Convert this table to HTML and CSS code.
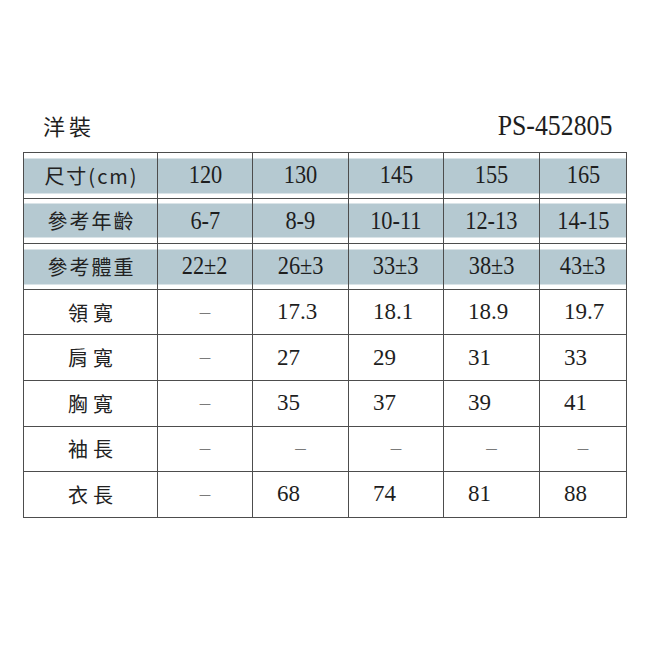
FILE: index.html
```html
<!DOCTYPE html>
<html lang="zh-Hant">
<head>
<meta charset="utf-8">
<title>洋裝 PS-452805</title>
<link rel="stylesheet" href="styles.css">
</head>
<body>
<div class="sheet">
  <div class="title-row">
    <span class="title">洋裝</span>
    <span class="code"><span class="cond">PS-452805</span></span>
  </div>
  <table class="size-table">
    <colgroup>
      <col class="c-label"><col class="c-a"><col class="c-b"><col class="c-a"><col class="c-b"><col class="c-last">
    </colgroup>
    <tr class="band">
      <th class="label">尺寸(cm)</th>
      <td><span class="cond">120</span></td>
      <td><span class="cond">130</span></td>
      <td><span class="cond">145</span></td>
      <td><span class="cond">155</span></td>
      <td><span class="cond">165</span></td>
    </tr>
    <tr class="band">
      <th class="label">參考年齡</th>
      <td><span class="cond">6-7</span></td>
      <td><span class="cond">8-9</span></td>
      <td><span class="cond">10-11</span></td>
      <td><span class="cond">12-13</span></td>
      <td><span class="cond">14-15</span></td>
    </tr>
    <tr class="band">
      <th class="label">參考體重</th>
      <td><span class="cond">22±2</span></td>
      <td><span class="cond">26±3</span></td>
      <td><span class="cond">33±3</span></td>
      <td><span class="cond">38±3</span></td>
      <td><span class="cond">43±3</span></td>
    </tr>
    <tr class="body">
      <th class="label">領寬</th>
      <td class="dash">–</td>
      <td class="val">17.3</td>
      <td class="val">18.1</td>
      <td class="val">18.9</td>
      <td class="val">19.7</td>
    </tr>
    <tr class="body">
      <th class="label">肩寬</th>
      <td class="dash">–</td>
      <td class="val">27</td>
      <td class="val">29</td>
      <td class="val">31</td>
      <td class="val">33</td>
    </tr>
    <tr class="body">
      <th class="label">胸寬</th>
      <td class="dash">–</td>
      <td class="val">35</td>
      <td class="val">37</td>
      <td class="val">39</td>
      <td class="val">41</td>
    </tr>
    <tr class="body">
      <th class="label">袖長</th>
      <td class="dash">–</td>
      <td class="dash">–</td>
      <td class="dash">–</td>
      <td class="dash">–</td>
      <td class="dash">–</td>
    </tr>
    <tr class="body">
      <th class="label">衣長</th>
      <td class="dash">–</td>
      <td class="val">68</td>
      <td class="val">74</td>
      <td class="val">81</td>
      <td class="val">88</td>
    </tr>
  </table>
</div>
</body>
</html>
```

FILE: styles.css
```css
html, body {
  margin: 0;
  padding: 0;
  background: #ffffff;
}

body {
  font-family: "Liberation Serif", "DejaVu Serif", serif;
  color: #1e1e1e;
}

.sheet {
  padding: 106px 0 0 23px;
  width: 603px;
}

.title-row {
  display: flex;
  justify-content: space-between;
  align-items: flex-end;
  padding: 0 14px 0 20px;
  height: 34px;
  margin-bottom: 12px;
}

.title {
  font-family: "Noto Sans CJK TC", sans-serif;
  font-size: 22px;
  letter-spacing: 4px;
  line-height: 30px;
  font-weight: 400;
}

.code {
  font-family: "Liberation Serif", "DejaVu Serif", serif;
  font-size: 30px;
  line-height: 30px;
}

.cond {
  display: inline-block;
  font-family: "Liberation Serif", "DejaVu Serif", serif;
  transform: scaleX(0.86);
}

.code .cond {
  transform-origin: right center;
}

.size-table {
  border-collapse: collapse;
  table-layout: fixed;
  width: 603px;
}

.c-label { width: 134px; }
.c-a { width: 95px; }
.c-b { width: 96px; }
.c-last { width: 87px; }

.size-table th,
.size-table td {
  border: 1px solid #4d4d4d;
  padding: 0;
  height: 44.6px;
  font-weight: 400;
}

.label {
  font-family: "Noto Sans CJK TC", sans-serif;
  font-size: 20px;
  letter-spacing: 5px;
  text-indent: 5px;
  text-align: center;
  color: #222;
}

.band th,
.band td {
  background: linear-gradient(#ffffff 5px, #b5c9d1 5px, #b5c9d1 calc(100% - 5px), #ffffff calc(100% - 5px));
  text-align: center;
  font-size: 26px;
}

.band .label {
  font-size: 20px;
  letter-spacing: 2px;
  text-indent: 2px;
}

.val {
  font-family: "Liberation Serif", "DejaVu Serif", serif;
  text-align: left;
  padding-left: 24px !important;
  font-size: 23px;
}

.dash {
  font-family: "Liberation Serif", "DejaVu Serif", serif;
  text-align: center;
  font-size: 21px;
  color: #7a7a7a;
}
```
